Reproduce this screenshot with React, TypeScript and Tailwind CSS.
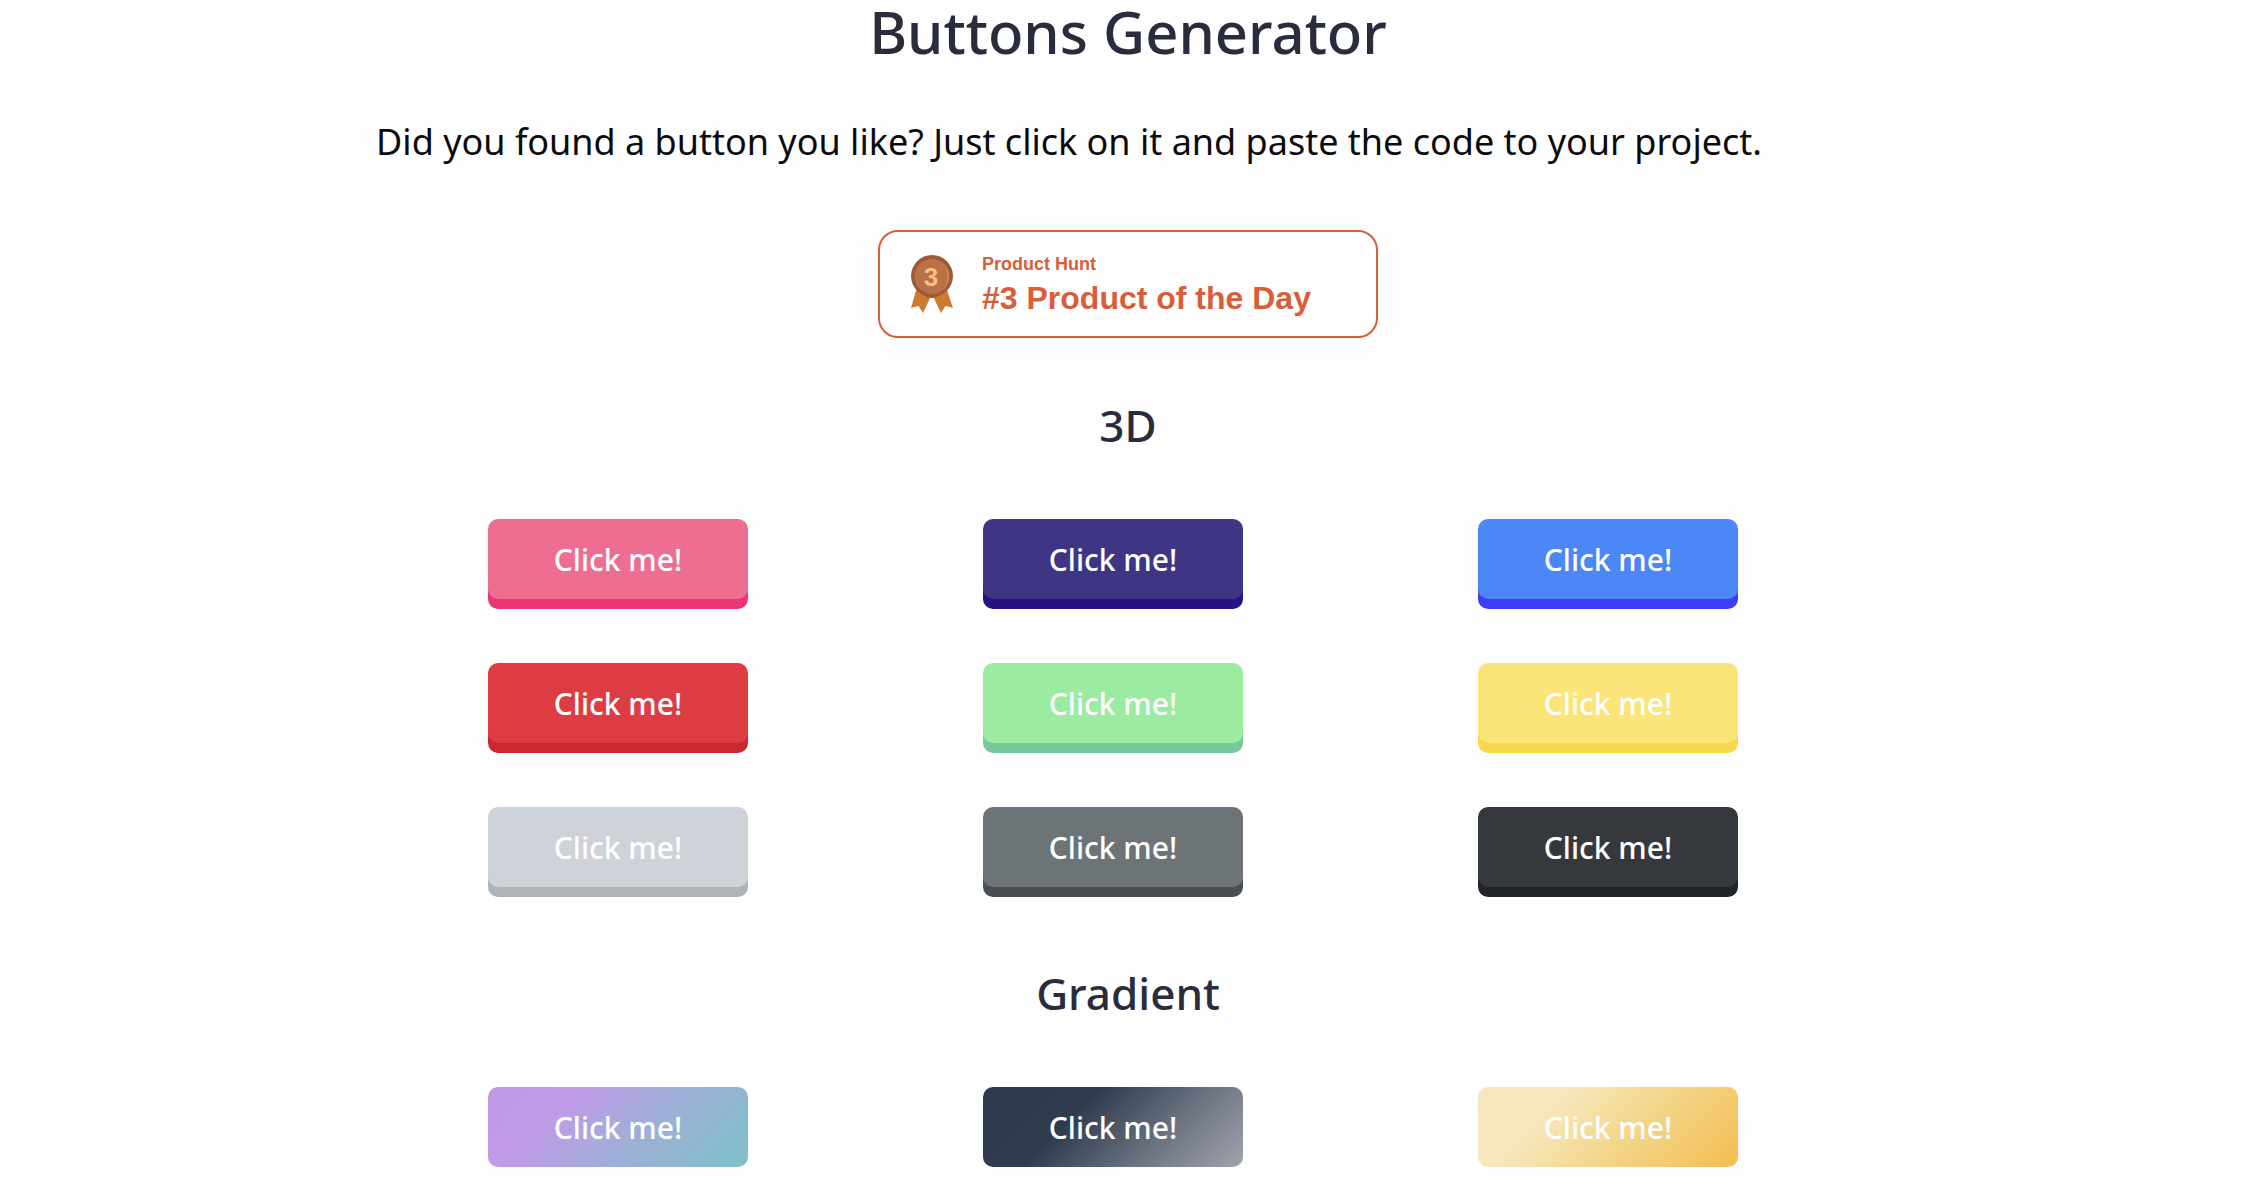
const solidButtons = [
  { id: "pink", style: "bg-[#ee6e92] shadow-[0_10px_0_0_#e93573]" },
  { id: "indigo", style: "bg-[#3e3584] shadow-[0_10px_0_0_#261285]" },
  { id: "blue", style: "bg-[#4b87f7] shadow-[0_10px_0_0_#3d3df5]" },
  { id: "red", style: "bg-[#de3c43] shadow-[0_10px_0_0_#c7292f]" },
  { id: "green", style: "bg-[#9beba1] shadow-[0_10px_0_0_#77c99d]" },
  { id: "yellow", style: "bg-[#fce578] shadow-[0_10px_0_0_#f8d84a]" },
  { id: "silver", style: "bg-[#ced3d9] shadow-[0_10px_0_0_#adb5b9]" },
  { id: "gray", style: "bg-[#6d7478] shadow-[0_10px_0_0_#4a4e54]" },
  { id: "charcoal", style: "bg-[#35393e] shadow-[0_10px_0_0_#212427]" },
];

const gradientButtons = [
  { id: "lilac", style: "bg-[linear-gradient(135deg,#bd9ae6_0%,#c29ae8_25%,#9db0d6_60%,#7dc1c8_100%)]" },
  { id: "slate", style: "bg-[linear-gradient(135deg,#2d3a4d_0%,#2f3c4e_35%,#737a87_72%,#a0a3ab_100%)]" },
  { id: "gold", style: "bg-[linear-gradient(135deg,#f6e6bb_0%,#f7e8c0_25%,#f3d88e_55%,#f2bd52_100%)]" },
];

function ButtonSection({ title, items }: { title: string; items: { id: string; style: string }[] }) {
  return (
    <section className="flex flex-col">
      <h2 className="mb-[60px] pl-2 text-center text-[44px] leading-[68px] font-medium text-[#292c3c]">{title}</h2>
      <div className="flex flex-col pr-[22px]">
        <div className="grid w-full max-w-[1485px] grid-cols-3 justify-items-center gap-y-16 self-center">
          {items.map((b) => (
            <button
              key={b.id}
              type="button"
              className={`h-20 w-[260px] cursor-pointer rounded-[10px] text-[30px] font-medium text-white ${b.style}`}
            >
              Click me!
            </button>
          ))}
        </div>
      </div>
    </section>
  );
}

function Medal() {
  return (
    <svg viewBox="0 0 44 58" className="h-[58px] w-11 shrink-0" aria-hidden="true">
      <path d="M7 32 L1 53 L8.500 51 L13 58 L22 39 L31 58 L35.500 51 L43 53 L36 32 Z" fill="#cd7a31" />
      <path d="M7 36 L17 43 L24 43 L36 36 L33 32 L9 32 Z" fill="#b5622b" />
      <circle cx="22" cy="21" r="21" fill="#9c5a38" />
      <circle cx="22" cy="21.500" r="17.500" fill="#b87245" />
      <path d="M33 8 A17.500 17.500 0 0 1 33 35 A24 24 0 0 0 33 8" fill="#c38257" />
      <text
        x="21"
        y="31"
        textAnchor="middle"
        className="font-['Liberation_Sans',sans-serif] text-[26px] font-bold"
        fill="#fbbf86"
      >
        3
      </text>
    </svg>
  );
}

export default function App() {
  return (
    <main className="flex min-h-screen flex-col bg-[#fefefe] font-['Noto_Sans',sans-serif]">
      <header className="flex flex-col items-center pl-2">
        <h1 className="text-[58px] leading-[64px] font-medium text-[#292c3c]">Buttons Generator</h1>
      </header>
      <p className="mt-[54px] self-center pr-[110px] text-[36px] leading-[48px] text-[#0b0b0d]">
        Did you found a button you like? Just click on it and paste the code to your project.
      </p>
      <div className="mt-16 flex justify-center pl-2">
        <a
          href="#product-hunt"
          className="flex h-[108px] w-[500px] items-center gap-7 rounded-[20px] border-2 border-[#d4603e] bg-white pl-[30px] font-['Liberation_Sans',sans-serif] font-bold text-[#d95d39]"
        >
          <Medal />
          <span className="flex flex-col pt-1">
            <span className="text-lg leading-6">Product Hunt</span>
            <span className="text-[32px] leading-[44px]">#3 Product of the Day</span>
          </span>
        </a>
      </div>
      <div className="flex flex-col gap-[72px] pt-[53px]">
        <ButtonSection title="3D" items={solidButtons} />
        <ButtonSection title="Gradient" items={gradientButtons} />
      </div>
    </main>
  );
}
